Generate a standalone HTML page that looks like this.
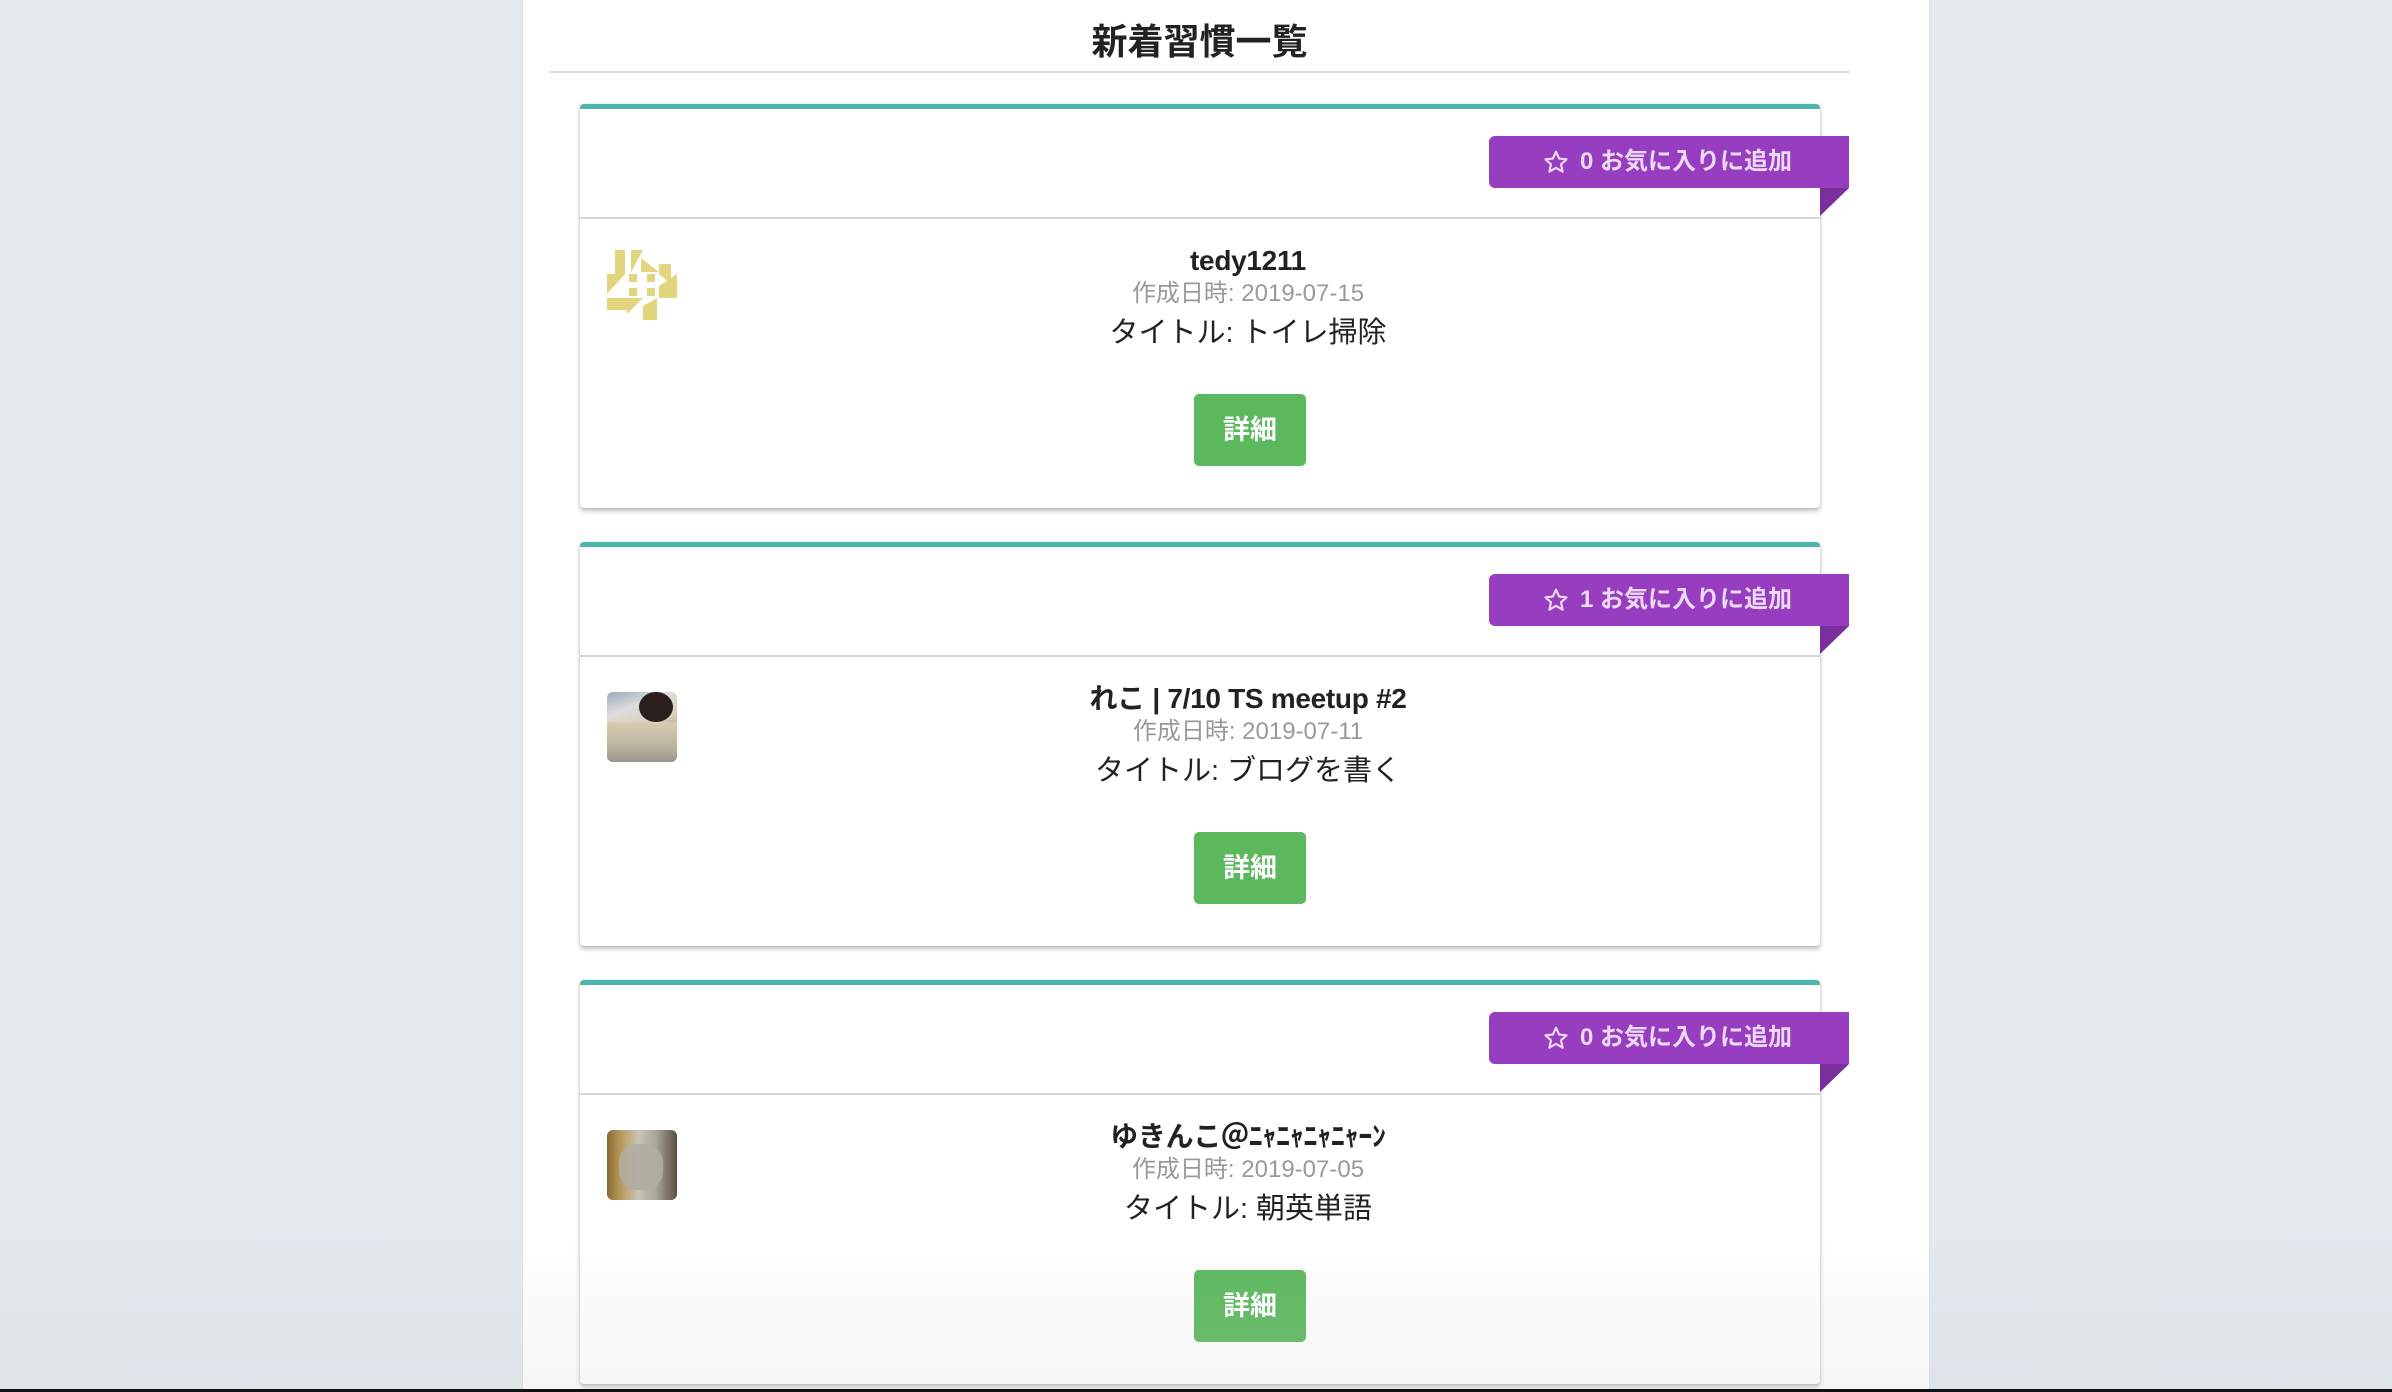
<!DOCTYPE html>
<html><head><meta charset="utf-8"><style>
*{margin:0;padding:0;box-sizing:border-box}
html,body{width:2392px;height:1392px;overflow:hidden}
body{background:#e4e9ee;font-family:"Liberation Sans","Noto Sans CJK JP",sans-serif;position:relative;color:#222}
.col{position:absolute;left:522px;top:0;width:1408px;height:1392px;background:#fff;border-left:1px solid #dde2e6;border-right:1px solid #dde2e6}
h1{position:absolute;left:549px;width:1301px;top:16px;text-align:center;font-size:36px;font-weight:bold;color:#222;line-height:52px}
.hr{position:absolute;left:549px;width:1301px;top:71px;height:2px;background:#ddd}
.card{position:absolute;left:580px;width:1240px;height:404px;background:#fff;border-top:5px solid #4db6ac;border-radius:4px;box-shadow:0 3px 5px rgba(0,0,0,.25),0 0 2px rgba(0,0,0,.12)}
.div{position:absolute;left:0;right:0;top:108px;height:2px;background:#d8d8d8}
.rib{position:absolute;left:909px;top:27px;width:360px;height:52px;background:#973dbf;border-radius:6px 0 0 6px;color:#ecd9f5;font-weight:bold;font-size:24px;line-height:52px}
.rib svg{position:absolute;left:54px;top:13px}
.rib span{position:absolute;left:91px}
.fold{position:absolute;left:1240px;top:79px;width:0;height:0;border-top:28px solid #7a2f9c;border-right:29px solid transparent}
.av{position:absolute;left:27px;top:145px;width:70px;height:70px;border-radius:6px;overflow:hidden}
.txt{position:absolute;left:300px;width:736px;top:134px;text-align:center}
.nm{font-size:28px;font-weight:bold;line-height:36px;color:#222;letter-spacing:-0.3px}
.dt{font-size:24px;color:#999;line-height:30px}
.tt{font-size:29px;line-height:48px;color:#222}
.btn{position:absolute;left:614px;top:285px;width:112px;height:72px;background:#5cb85c;border-radius:5px;color:#fff;font-weight:bold;font-size:27px;line-height:72px;text-align:center}
.fade{position:absolute;left:0;right:0;top:1230px;height:160px;background:linear-gradient(rgba(200,205,210,0),rgba(200,205,210,.18))}
.bar{position:absolute;left:0;right:0;bottom:0;height:3px;background:#111}
</style></head><body>
<div class="col"></div>
<h1>新着習慣一覧</h1>
<div class="hr"></div>

<div class="card" style="top:104px">
<div class="rib"><svg width="26" height="26" viewBox="0 0 24 24"><path d="M12 2.5l2.9 6.3 6.8.7-5.1 4.6 1.5 6.8L12 17.4l-6.1 3.5 1.5-6.8-5.1-4.6 6.8-.7z" fill="none" stroke="#ecd9f5" stroke-width="2" stroke-linejoin="round"/></svg><span>0 お気に入りに追加</span></div>
<div class="fold"></div>
<div class="div"></div>
<div class="av" style="top:141px;left:27px"><svg width="70" height="70" viewBox="0 0 70 70" fill="#e3d47e"><polygon points="8,0 18,0 18,24 8,24"/><polygon points="24,0 36,0 24,22"/><polygon points="34,8 52,22 34,22"/><polygon points="52,14 64,14 64,34 52,24"/><polygon points="0,24 18,24 0,44"/><polygon points="0,48 20,48 20,60 0,60"/><polygon points="20,48 36,48 20,64"/><polygon points="36,56 50,48 50,70 36,70"/><polygon points="52,36 70,24 70,48 52,48"/><rect x="22" y="24" width="8" height="8"/><rect x="40" y="24" width="8" height="8"/><rect x="22" y="38" width="8" height="8"/><rect x="40" y="38" width="8" height="8"/></svg></div>
<div class="txt"><div class="nm">tedy1211</div><div class="dt">作成日時: 2019-07-15</div><div class="tt">タイトル: トイレ掃除</div></div>
<div class="btn">詳細</div>
</div>

<div class="card" style="top:542px">
<div class="rib"><svg width="26" height="26" viewBox="0 0 24 24"><path d="M12 2.5l2.9 6.3 6.8.7-5.1 4.6 1.5 6.8L12 17.4l-6.1 3.5 1.5-6.8-5.1-4.6 6.8-.7z" fill="none" stroke="#ecd9f5" stroke-width="2" stroke-linejoin="round"/></svg><span>1 お気に入りに追加</span></div>
<div class="fold"></div>
<div class="div"></div>
<div class="av" style="background:linear-gradient(160deg,#9ab 0%,#ddd 25%,#d9cfb8 50%,#8a8680 75%,#bdb7aa 100%)"><div style="position:absolute;left:32px;top:0;width:34px;height:30px;border-radius:50%;background:#2a1e1e"></div><div style="position:absolute;left:0;top:30px;width:70px;height:40px;background:linear-gradient(#d8cdb0,#bdb4a0 60%,#9a968c)"></div></div>
<div class="txt"><div class="nm">れこ | 7/10 TS meetup #2</div><div class="dt">作成日時: 2019-07-11</div><div class="tt">タイトル: ブログを書く</div></div>
<div class="btn">詳細</div>
</div>

<div class="card" style="top:980px">
<div class="rib"><svg width="26" height="26" viewBox="0 0 24 24"><path d="M12 2.5l2.9 6.3 6.8.7-5.1 4.6 1.5 6.8L12 17.4l-6.1 3.5 1.5-6.8-5.1-4.6 6.8-.7z" fill="none" stroke="#ecd9f5" stroke-width="2" stroke-linejoin="round"/></svg><span>0 お気に入りに追加</span></div>
<div class="fold"></div>
<div class="div"></div>
<div class="av" style="background:linear-gradient(90deg,#8a6a30 0%,#b99a5c 20%,#c9c4b4 45%,#a9a597 70%,#5a5040 100%)"><div style="position:absolute;left:12px;top:14px;width:44px;height:46px;border-radius:40%;background:#b0ad9f;opacity:.9"></div></div>
<div class="txt"><div class="nm">ゆきんこ＠ﾆｬﾆｬﾆｬﾆｬｰﾝ</div><div class="dt">作成日時: 2019-07-05</div><div class="tt">タイトル: 朝英単語</div></div>
<div class="btn">詳細</div>
</div>

<div class="fade"></div>
<div class="bar"></div>
</body></html>
